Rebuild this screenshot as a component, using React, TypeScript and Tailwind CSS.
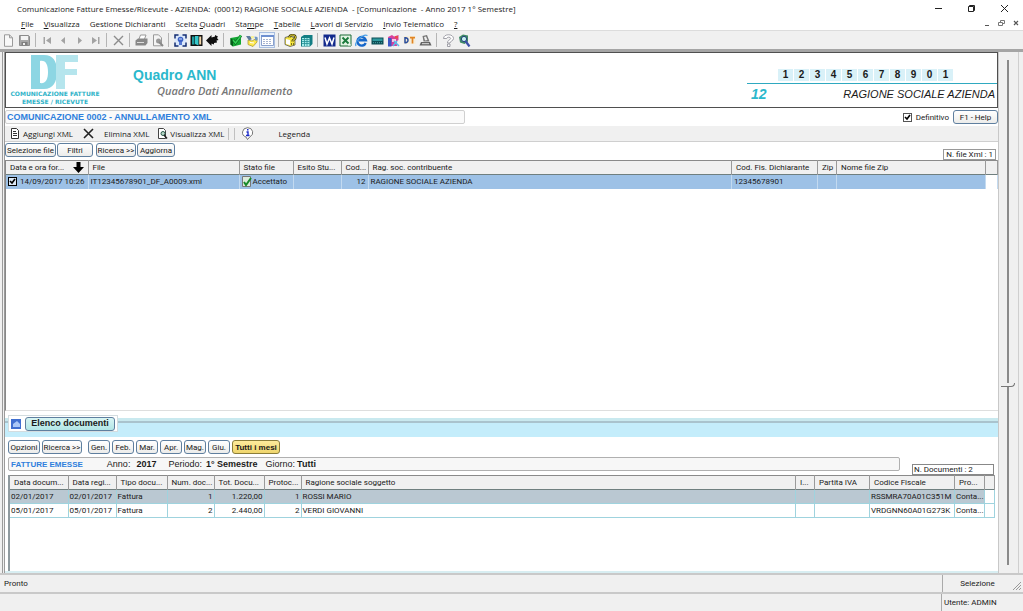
import React from 'react';
import { clsx } from 'clsx';
import { twMerge } from 'tailwind-merge';

const menus = [
  { pre: '', key: 'F', post: 'ile' },
  { pre: '', key: 'V', post: 'isualizza' },
  { pre: 'Gestione Dichiaranti', key: '', post: '' },
  { pre: 'Scelta ', key: 'Q', post: 'uadri' },
  { pre: 'Sta', key: 'm', post: 'pe' },
  { pre: '', key: 'T', post: 'abelle' },
  { pre: '', key: 'L', post: 'avori di Servizio' },
  { pre: '', key: 'I', post: 'nvio Telematico' },
  { pre: '', key: '?', post: '' },
];

const glyphs: Record<string, React.ReactNode> = {
  Nuovo: <path d="M2.500.8h5l3 3v8.500h-8zM7.500.8v3h3" fill="#f8f8f8" stroke="#9a9a9a" />,
  Salva: (
    <>
      <path d="M1.500 1.500h9l1 1v9h-10z" fill="#a8a8a8" stroke="#8c8c8c" />
      <path d="M3 2h7v4H3z" fill="#f4f4f4" />
      <path d="M3.500 8h6v3.500h-6z" fill="#808080" />
      <path d="M5 9h2v2H5z" fill="#eee" />
    </>
  ),
  Primo: <path d="M2.500 3h1.500v7H2.500zM10 3v7L5 6.500z" fill="#a3a3a3" />,
  Precedente: <path d="M8 3v7L4 6.500z" fill="#a3a3a3" />,
  Successivo: <path d="M5 3v7l4-3.500z" fill="#a3a3a3" />,
  Ultimo: <path d="M9 3h1.500v7H9zM3 3v7l5-3.500z" fill="#a3a3a3" />,
  Annulla: <path d="M2 2l9 9M11 2l-9 9" stroke="#8c8c8c" strokeWidth="1.400" />,
  Stampa: (
    <>
      <path d="M4 5l1.500-4h5.500L9.500 5" fill="#fff" stroke="#999" />
      <path d="M.5 6.500L3 4.500h9.500v4.500L10.500 11.500H.5z" fill="#888" />
      <path d="M2 8.500h7" stroke="#ddd" />
    </>
  ),
  Anteprima: (
    <>
      <path d="M2.500.8h5l3 3v8h-8z" fill="#f4f4f4" stroke="#999" />
      <circle cx="7.500" cy="7" r="2.500" fill="#999" />
      <path d="M8 8l4 4" stroke="#888" strokeWidth="2" />
    </>
  ),
  Quadri: (
    <>
      <path d="M.5.5h12v12H.5z" fill="#dbe8fb" />
      <path d="M1 4.500V1h3.500M8.500 1H12v3.500M12 8.500V12H8.500M4.500 12H1V8.500" fill="none" stroke="#142c70" strokeWidth="1.500" />
      <circle cx="6.500" cy="5.500" r="2.800" fill="#3d62c6" />
      <path d="M5 8h3v3H5z" fill="#5679d2" />
      <path d="M5 5h3" stroke="#c8ddff" />
    </>
  ),
  Esci: (
    <>
      <path d="M.5 1h12v11H.5z" fill="#101010" />
      <path d="M2 2.500h2.500v8H2z" fill="#1d9a9c" />
      <path d="M5 2h3.500v9.500L5 10z" fill="#36c7cb" />
      <path d="M9.200 2.500h2v8h-2z" fill="#f1d5a8" />
    </>
  ),
  Indietro: <path d="M0 6.500L5.500 1v2.500L9 2.500V1l3 1.500L11 4l1.500 2-2 .5.5 2-3 .5v1.500L5.500 9.500V12z" fill="#101010" />,
  Conferma: (
    <>
      <path d="M1.500 4l8.500-1.500 2 2v6L4 12.500l-2.500-2z" fill="#14a834" />
      <path d="M1.500 4L4 6v6.500l-2.500-2z" fill="#075b1b" />
      <path d="M4 6l2.500 3L12 1.500" fill="none" stroke="#0a6b20" strokeWidth="2.800" />
      <path d="M4 6l2.500 3L12 1.500" fill="none" stroke="#35d257" strokeWidth="1.400" />
    </>
  ),
  Importa: (
    <>
      <path d="M3 6l4 1 5-3v4l-4 4.500-5-2z" fill="#ffe94d" stroke="#a2932b" strokeWidth=".7" />
      <path d="M1 2h4l2 3-3 1.500z" fill="#5e7a9d" />
      <path d="M6 2h3v2.500H6z" fill="#f8f29a" />
      <path d="M9.500 2.500l3 .5v3l-2 1z" fill="#6f97c4" />
      <path d="M5 8.500l4 .5" stroke="#fff" />
    </>
  ),
  Griglia: (
    <>
      <path d="M.5 1.500h12v10H.5z" fill="#fff" stroke="#8aa0cc" />
      <path d="M0 1h13v2H0z" fill="#6d8fd0" />
      <path d="M2 5.500h9M2 7.500h9M2 9.500h9" stroke="#a7b4d0" strokeDasharray="2 1" />
    </>
  ),
  Guida: (
    <>
      <path d="M1 3.500L6 2l5 2v7l-5 1.500-5-2z" fill="#f6e642" stroke="#555" strokeWidth=".8" />
      <path d="M2 5l4 1v5l-4-1z" fill="#fff" />
      <path d="M5.500 3.500c0-3.200 6-3.200 6 0 0 2.200-3 2-3 4M8.500 9v2" fill="none" stroke="#4a430c" strokeWidth="2.400" />
      <path d="M5.500 3.500c0-3.200 6-3.200 6 0 0 2.200-3 2-3 4M8.500 9v2" fill="none" stroke="#f6e642" strokeWidth="1" />
    </>
  ),
  Elenco: (
    <>
      <path d="M1 3l3-2h8.500v9l-2.500 2.500H1z" fill="#127d83" />
      <path d="M2 4h7.500v8H2z" fill="#a5ece9" />
      <path d="M2 5.500h7.500M2 7.500h7.500M2 9.500h7.500M4.500 4v8M7 4v8" stroke="#238e94" strokeWidth=".8" />
    </>
  ),
  Word: (
    <>
      <path d="M.5.500h12v12H.5z" fill="#132a8c" />
      <path d="M2 3.500l2 6.500 2.500-6L9 10l2-6.500" fill="none" stroke="#fff" strokeWidth="1.500" />
    </>
  ),
  Excel: (
    <>
      <path d="M1 1h11v11H1z" fill="#e4f4e4" stroke="#1c6a37" />
      <path d="M3.500 3.500l6 6M9.500 3.500l-6 6" stroke="#1c7a3d" strokeWidth="1.900" />
      <path d="M9 11h3" stroke="#fff" />
    </>
  ),
  Internet: (
    <>
      <path d="M10.700 9a4.300 4.300 0 1 1 .2-2.800H4" fill="none" stroke="#1767ca" strokeWidth="2.400" />
      <path d="M1 12C-1 8 8-.8 12.500 1.500" fill="none" stroke="#4ba0e8" strokeWidth="1.300" />
    </>
  ),
  Calcolatrice: (
    <>
      <path d="M.5 3.500h12V10.500H.5z" fill="#0d4f57" />
      <path d="M1.500 4.500h10v2.500h-10z" fill="#2f9a9f" />
      <path d="M2 8.700h9" stroke="#4fa4a8" strokeDasharray="1 1" />
    </>
  ),
  Archivio: (
    <>
      <path d="M1 3l4-2 2 1.500L11.500 1v5L10 7v5H2z" fill="#d8409d" />
      <path d="M1 4h3.500v8.500H1z" fill="#3b57c4" />
      <path d="M5 5h4v3H5z" fill="#f7c9e2" />
      <path d="M7 7l5 5M6 12l4-5" stroke="#58b9ea" strokeWidth="1.500" />
      <path d="M8 2h3v2.500H8z" fill="#e84b4b" />
    </>
  ),
  Telematico: (
    <>
      <path d="M.5 2h12v8H.5z" fill="#f5edda" />
      <path d="M2 3.700v5c4 .5 4-5.500 0-5z" fill="none" stroke="#284c9c" strokeWidth="1.500" />
      <path d="M7 3.700h5M9.500 3.700v5.800" stroke="#e18424" strokeWidth="1.700" />
    </>
  ),
  Firma: (
    <>
      <path d="M3.500 2L8 1l2.500 6.500h-6z" fill="#777" />
      <path d="M5 3l2-.5L8.500 6 6 6.500z" fill="#eee" />
      <path d="M2 8h9l1.500 3.500H.5z" fill="#666" />
      <path d="M3 9.700h7" stroke="#ddd" />
    </>
  ),
  Aiuto: (
    <path d="M1.500 4.500c0-5 10-5 10 0 0 2.500-3.500 2.500-3.500 4.500H5.500c0-3.500 3.200-3 3.200-4.500 0-1.800-4-1.800-4 0zM5.500 10h2.500v2.500H5.500z" fill="#fff" stroke="#8b8b95" strokeWidth=".8" />
  ),
  Cerca: (
    <>
      <path d="M1 3l4-2.500 5 1v6L6.500 10 2 8.500z" fill="#3f8a66" />
      <circle cx="6" cy="5" r="2.600" fill="#c6f0f0" stroke="#223f7c" />
      <path d="M7.500 7l4 5.500" stroke="#3c4fa8" strokeWidth="2.200" />
    </>
  ),
};

const toolGroups = [
  ['Nuovo', 'Salva'],
  ['Primo', 'Precedente', 'Successivo', 'Ultimo'],
  ['Annulla'],
  ['Stampa', 'Anteprima'],
  ['Quadri', 'Esci', 'Indietro'],
  ['Conferma', 'Importa', 'Griglia'],
  ['Guida', 'Elenco'],
  ['Word', 'Excel', 'Internet', 'Calcolatrice', 'Archivio', 'Telematico', 'Firma'],
  ['Aiuto', 'Cerca'],
];

const fileCols = [
  { label: 'Data e ora for...', w: 'w-[82px]' },
  { label: 'File', w: 'w-[151px]' },
  { label: 'Stato file', w: 'w-[54px]' },
  { label: 'Esito Stu...', w: 'w-[48px]' },
  { label: 'Cod...', w: 'w-[27px]' },
  { label: 'Rag. soc. contribuente', w: '' },
  { label: 'Cod. Fis. Dichiarante', w: 'w-[86px]' },
  { label: 'Zip', w: 'w-[19px]' },
  { label: 'Nome file Zip', w: 'w-[149px]' },
  { label: '', w: 'w-[12px]' },
];

const docCols = [
  { label: 'Data docum...', w: 'w-[58px]' },
  { label: 'Data regi...', w: 'w-[48px]' },
  { label: 'Tipo docu...', w: 'w-[51px]' },
  { label: 'Num. doc...', w: 'w-[47px]' },
  { label: 'Tot. Docu...', w: 'w-[50px]' },
  { label: 'Protoc...', w: 'w-[37px]' },
  { label: 'Ragione sociale soggetto', w: '' },
  { label: 'I...', w: 'w-[19px]' },
  { label: 'Partita IVA', w: 'w-[55px]' },
  { label: 'Codice Fiscale', w: 'w-[85px]' },
  { label: 'Pro...', w: 'w-[30px]' },
  { label: '', w: 'w-[10px]' },
];

const docs = [
  ['02/01/2017', '02/01/2017', 'Fattura', '1', '1.220,00', '1', 'ROSSI MARIO', '', '', 'RSSMRA70A01C351M', 'Conta...', ''],
  ['05/01/2017', '05/01/2017', 'Fattura', '2', '2.440,00', '2', 'VERDI GIOVANNI', '', '', 'VRDGNN60A01G273K', 'Conta...', ''],
];

const months = ['Gen.', 'Feb.', 'Mar.', 'Apr.', 'Mag.', 'Giu.'];

const Glyph = ({ name }: { name: string }) => (
  <svg width="13" height="13" viewBox="0 0 13 13" fill="none" className="shrink-0">
    {glyphs[name]}
  </svg>
);

const Button = ({ children, className }: { children: React.ReactNode; className?: string }) => (
  <button
    className={twMerge(
      'flex h-3.5 items-center justify-center whitespace-nowrap rounded-[3px] border border-[#5f7f9f] bg-linear-to-b from-white to-[#ececea]',
      className
    )}
  >
    {children}
  </button>
);

const HeadRow = ({ cols }: { cols: { label: string; w: string }[] }) => (
  <thead>
    <tr className="h-3.5 border-y border-t-[#8a8a8a] border-b-[#6f7f7f] bg-[#f0f0f0]">
      {cols.map((col, i) => (
        <th key={i} className={clsx('overflow-hidden whitespace-nowrap border-r border-[#9a9a9a] px-1 text-left font-normal', col.w)}>
          {i === 0 && col.label.startsWith('Data e') ? (
            <span className="flex items-center justify-between">
              {col.label}
              <svg width="11" height="11" viewBox="0 0 11 11">
                <path d="M3.500 0h4v5H11l-5.500 6L0 5h3.500z" fill="#000" />
              </svg>
            </span>
          ) : (
            col.label
          )}
        </th>
      ))}
    </tr>
  </thead>
);

const Tick = () => (
  <svg className="pointer-events-none absolute left-0 top-0" width="9" height="9" viewBox="0 0 9 9">
    <path d="M2 4l2 2 3-4" fill="none" stroke="#000" strokeWidth="1.600" />
  </svg>
);

const TitleBar = () => (
  <header className="font-['Open_Sans','Noto_Sans',sans-serif]">
    <div className="flex h-4 items-center justify-between pl-[17px] pr-3.5">
      <h1 className="whitespace-pre">
        {'Comunicazione Fatture Emesse/Ricevute - AZIENDA:  (00012) RAGIONE SOCIALE AZIENDA  - [Comunicazione  - Anno 2017 1° Semestre]'}
      </h1>
      <div className="flex items-center gap-6">
        <button aria-label="Riduci">
          <svg width="9" height="9" viewBox="0 0 9 9"><path d="M1 4.500h7" stroke="#222" /></svg>
        </button>
        <button aria-label="Ripristina">
          <svg width="9" height="9" viewBox="0 0 9 9" fill="none" stroke="#222"><path d="M1.500 2.500h5v5h-5zM2.500 2.500v-1h5v5h-1" /></svg>
        </button>
        <button aria-label="Chiudi">
          <svg width="9" height="9" viewBox="0 0 9 9"><path d="M1 1l7 7M8 1L1 8" stroke="#222" /></svg>
        </button>
      </div>
    </div>
    <div className="flex h-3.5 items-center justify-between pl-[21px] pr-1">
      <nav className="flex gap-2.5">
        {menus.map((m) => (
          <button key={m.pre + m.key + m.post} className="whitespace-pre">
            {m.pre}
            <u>{m.key}</u>
            {m.post}
          </button>
        ))}
      </nav>
      <div className="flex gap-2">
        <button aria-label="Riduci finestra">
          <svg width="6" height="8" viewBox="0 0 6 8"><path d="M1 6.500h4" stroke="#555" /></svg>
        </button>
        <button aria-label="Ripristina finestra">
          <svg width="7" height="8" viewBox="0 0 7 8" fill="none" stroke="#777"><path d="M.5 3.500h4v3h-4zM2.500 3V1.500h4v3H5" /></svg>
        </button>
        <button aria-label="Chiudi finestra">
          <svg width="6" height="8" viewBox="0 0 6 8"><path d="M1 2l4 4M5 2L1 6" stroke="#555" strokeWidth="1.200" /></svg>
        </button>
      </div>
    </div>
  </header>
);

const Toolbar = () => (
  <div className="flex h-[19px] items-center border-t border-[#dcdcdc] bg-[#f0f0f0]">
    {toolGroups.map((group, i) => (
      <React.Fragment key={i}>
        {i > 0 && <span className="mx-[3px] h-3.5 w-px bg-[#b5b5b5]" />}
        {group.map((name) => (
          <button
            key={name}
            aria-label={name}
            className={clsx('flex h-4 w-4 items-center justify-center', name === 'Griglia' && 'border border-[#a9bfe0] bg-[#eaf2fc]')}
          >
            <Glyph name={name} />
          </button>
        ))}
      </React.Fragment>
    ))}
  </div>
);

const Banner = () => (
  <section className="flex h-14 justify-between border border-[#4f4f4f] bg-white font-['Liberation_Sans',Arial,sans-serif]">
    <div className="flex">
      <div className="flex w-[98px] flex-col items-center">
        <svg width="50" height="35" viewBox="0 0 50 35" className="mt-0.5">
          <path d="M1 0h13c9 0 13 6 13 16.500S23 34 14 34H1zM10 6v22c6 1 8-4 8-11S16 5 10 6z" fill="#8dd6e3" fillRule="evenodd" />
          <path d="M26 0h22v7H35v7h12v6H35v14h-9z" fill="#b5e5ed" />
        </svg>
        <p className="text-center font-['DejaVu_Sans',sans-serif] text-[6px] font-bold leading-[8px] text-[#2fb3c8]">
          COMUNICAZIONE FATTURE
          <br />
          EMESSE / RICEVUTE
        </p>
      </div>
      <div className="pl-[29px] pt-3">
        <h2 className="text-sm font-bold leading-5 text-[#2bb8cc]">Quadro ANN</h2>
        <p className="pl-6 font-['Open_Sans','Noto_Sans',sans-serif] text-[11px] font-semibold italic leading-3 text-[#777]">Quadro Dati Annullamento</p>
      </div>
    </div>
    <div className="w-[250px] pt-4">
      <div className="flex gap-px border-b border-[#2fa9c0] pb-0.5 pl-[31px]">
        {'12345678901'.split('').map((d, i) => (
          <span key={i} className="w-[15px] bg-[#d9f1f8] text-center text-[10px] font-bold leading-3">
            {d}
          </span>
        ))}
      </div>
      <div className="flex items-center justify-between pl-1 pr-0.5 italic">
        <span className="text-sm font-bold text-[#2bb8cc]">12</span>
        <span className="text-[11px]">RAGIONE SOCIALE AZIENDA</span>
      </div>
    </div>
  </section>
);

const FileTable = () => (
  <div className="min-h-0 flex-1 border-b border-[#dedede] border-l border-l-[#888] bg-white">
    <table className="w-full table-fixed border-collapse">
      <HeadRow cols={fileCols} />
      <tbody>
        <tr className="h-3.5 bg-[#9dc1e6] *:overflow-hidden *:whitespace-nowrap *:border-r *:border-[#c3daf0] *:px-0.5">
          <td>
            <label className="flex items-center gap-[3px]">
              <span className="relative flex">
                <input type="checkbox" defaultChecked className="h-[9px] w-[9px] appearance-none border border-black bg-[#dbe8f5]" />
                <Tick />
              </span>
              14/09/2017 10:26
            </label>
          </td>
          <td>IT12345678901_DF_A0009.xml</td>
          <td>
            <span className="flex items-center gap-px">
              <svg width="10" height="11" viewBox="0 0 10 11">
                <path d="M.5.5h8v10h-8z" fill="#dcebdc" stroke="#777" />
                <path d="M2 6l2 3 5-7" fill="none" stroke="#168a28" strokeWidth="2" />
              </svg>
              Accettato
            </span>
          </td>
          <td />
          <td className="text-right">12</td>
          <td>RAGIONE SOCIALE AZIENDA</td>
          <td>12345678901</td>
          <td />
          <td />
          <td className="bg-white" />
        </tr>
      </tbody>
    </table>
  </div>
);

const DocTable = () => (
  <div className="mx-[3px] h-24 border-l-2 border-[#8f9a9f] bg-white">
    <table className="w-full table-fixed border-collapse">
      <HeadRow cols={docCols} />
      <tbody>
        {docs.map((row, r) => (
          <tr key={row[0]} className={clsx('h-3.5 border-b border-[#9fd3de]', r === 0 && 'bg-[#bac8d2]')}>
            {row.map((cell, c) => (
              <td
                key={c}
                className={clsx(
                  'overflow-hidden whitespace-nowrap border-r border-[#9fd3de] px-px',
                  c >= 3 && c <= 5 && 'text-right',
                  c === 11 && 'bg-white'
                )}
              >
                {cell}
              </td>
            ))}
          </tr>
        ))}
      </tbody>
    </table>
  </div>
);

export default function App() {
  return (
    <div className="flex min-h-screen flex-col bg-white font-[Roboto,'Liberation_Sans',sans-serif] text-[8px] leading-[11px] text-[#1a1a1a]">
      <TitleBar />
      <Toolbar />
      <div className="flex flex-1 border-t-[3px] border-[#a5a5a5] bg-[#f0f0f0]">
        <div className="ml-0.5 w-[3px] border-x border-[#9b9b9b]" />
        <main className="flex min-w-0 flex-1 flex-col border-r border-[#c8c8c8] bg-white">
          <Banner />

          <div className="flex h-[18px] items-center justify-between">
            <h3 className="flex h-3.5 w-[460px] items-center rounded-xs border border-[#d0d0d0] bg-[#fafafa] pl-px font-['Liberation_Sans',Arial,sans-serif] text-[9px] font-bold text-[#2f7fdc]">
              COMUNICAZIONE 0002 - ANNULLAMENTO XML
            </h3>
            <div className="flex items-center gap-1">
              <label className="flex items-center gap-1">
                <span className="relative flex">
                  <input type="checkbox" defaultChecked className="h-[9px] w-[9px] appearance-none border border-[#555] bg-white" />
                  <Tick />
                </span>
                Definitivo
              </label>
              <Button className="w-[45px]">F1 - Help</Button>
            </div>
          </div>

          <div className="flex h-4 items-center border-b border-[#cfcfcf] bg-[#f0f0f0] pl-[5px] font-['Open_Sans','Noto_Sans',sans-serif]">
            <button className="flex items-center gap-[3px]">
              <svg width="10" height="11" viewBox="0 0 10 11" fill="#fff" stroke="#333">
                <path d="M1.500.5h5l2 2v8h-7zM3 3.500h3M3 5.500h4M3 7.500h4" />
              </svg>
              Aggiungi XML
            </button>
            <button className="ml-2.5 flex items-center gap-2.5">
              <svg width="11" height="11" viewBox="0 0 11 11">
                <path d="M1 1l9 9M10 1l-9 9" stroke="#222" strokeWidth="1.600" />
              </svg>
              Elimina XML
            </button>
            <button className="ml-2 flex items-center gap-0.5">
              <svg width="11" height="11" viewBox="0 0 11 11" fill="none">
                <path d="M1.500.5h5l2 2v8h-7z" fill="#fff" stroke="#444" />
                <circle cx="6" cy="5.500" r="2" fill="#b8d8c8" stroke="#2a5b4c" />
                <path d="M7 7l3 3.500" stroke="#222" strokeWidth="1.500" />
              </svg>
              Visualizza XML
            </button>
            <span className="ml-1 h-3 w-[7px] border-x border-[#c0c0c0]" />
            <button className="ml-1.5 flex items-center gap-6">
              <svg width="13" height="13" viewBox="0 0 13 13">
                <path d="M6.500.7a5.300 4.800 0 0 1 2.500 9L6.500 12.500 5 10A5.300 4.800 0 0 1 6.500.7z" fill="#fff" stroke="#555" strokeWidth=".8" />
                <path d="M5.500 5h1.500v3.500M5 8.500h3.500" fill="none" stroke="#1b2bc8" strokeWidth="1.400" />
                <path d="M6 2h1.500v1.500H6z" fill="#1b2bc8" />
              </svg>
              Legenda
            </button>
          </div>

          <div className="flex h-[18px] items-start justify-between pr-0.5 pt-px">
            <div className="flex gap-px">
              <Button className="w-[51px]">Selezione file</Button>
              <Button className="w-9">Filtri</Button>
              <Button className="ml-0.5 w-10">Ricerca &gt;&gt;</Button>
              <Button className="w-[38px]">Aggiorna</Button>
            </div>
            <span className="self-end border border-[#999] px-0.5 leading-[9px]">N. file Xml : 1</span>
          </div>

          <FileTable />

          <div className="mt-1 flex h-[22px] items-start bg-[linear-gradient(to_bottom,#fff_0_3px,#c9e9ef_3px_6px,#a9c3cd_6px_8px,#c4edfb_8px)] pl-[3px]">
            <div className="flex h-[17px] items-center gap-1 border border-[#d3dcdf] bg-white px-0.5">
              <svg width="10" height="10" viewBox="0 0 10 10">
                <path d="M0 0h10v10H0z" fill="#3f6fd0" />
                <path d="M2 5l4-3 3 3v3H2z" fill="#a9c7f7" />
              </svg>
              <Button className="w-[90px] from-[#d8f5f4] to-[#b2e6e6] font-['Liberation_Sans',Arial,sans-serif] text-[9px] font-bold">Elenco documenti</Button>
            </div>
          </div>

          <div className="flex h-5 items-center gap-0.5 pl-[3px]">
            <Button className="w-8">Opzioni</Button>
            <Button className="w-10">Ricerca &gt;&gt;</Button>
            <div className="ml-1 flex gap-0.5">
              {months.map((m) => (
                <Button key={m} className="w-[22px]">
                  {m}
                </Button>
              ))}
            </div>
            <Button className="w-12 border-[#8a7d3a] from-[#fdeb9b] to-[#efd56c] font-['Liberation_Sans',Arial,sans-serif] font-bold">Tutti i mesi</Button>
          </div>

          <div className="flex h-[18px] items-start justify-between pl-[3px] pr-1">
            <div className="mr-3 flex h-3.5 flex-1 items-center rounded-xs border border-[#b0b0b0] bg-[#f7f7f7] pl-0.5 font-['Liberation_Sans',Arial,sans-serif] text-[9px]">
              <h3 className="text-[8px] font-bold text-[#2f7fdc]">FATTURE EMESSE</h3>
              <span className="ml-6">Anno:</span>
              <b className="ml-1.5">2017</b>
              <span className="ml-3">Periodo:</span>
              <b className="ml-1">1° Semestre</b>
              <span className="ml-2">Giorno:</span>
              <b className="ml-0.5">Tutti</b>
            </div>
            <span className="w-[82px] self-end border border-[#888] px-px leading-[9px]">N. Documenti : 2</span>
          </div>

          <DocTable />
          <div className="h-0.5 bg-[#d8eef2]" />
        </main>

        {/* vertical zoom slider */}
        <aside className="mr-1 flex w-5 border-r border-[#cfcfcf] py-2 pl-2">
          <div className="relative w-0.5 bg-[#8a8a8a]">
            <div className="absolute -left-1.5 top-[64%] h-1 w-3.5 rounded-br-full border-b border-r border-[#777] bg-[#f0f0f0]" />
          </div>
        </aside>
      </div>

      <footer className="bg-[#f0f0f0]">
        <div className="flex h-[19px] border-t-2 border-[#c9c9c9]">
          <span className="flex flex-1 items-center pl-1">Pronto</span>
          <span className="flex w-[70px] items-center justify-center border-l border-[#aaa]">Selezione</span>
          <svg width="11" height="17" viewBox="0 0 11 17" className="self-end">
            <path d="M1 15l8-8M4 15l5-5M7 15l2-2" stroke="#999" />
          </svg>
        </div>
        <div className="flex h-[19px] border-t-2 border-[#c9c9c9]">
          <span className="flex-1" />
          <span className="flex w-[82px] items-center border-l border-[#aaa] pl-0.5">Utente: ADMIN</span>
        </div>
      </footer>
    </div>
  );
}
